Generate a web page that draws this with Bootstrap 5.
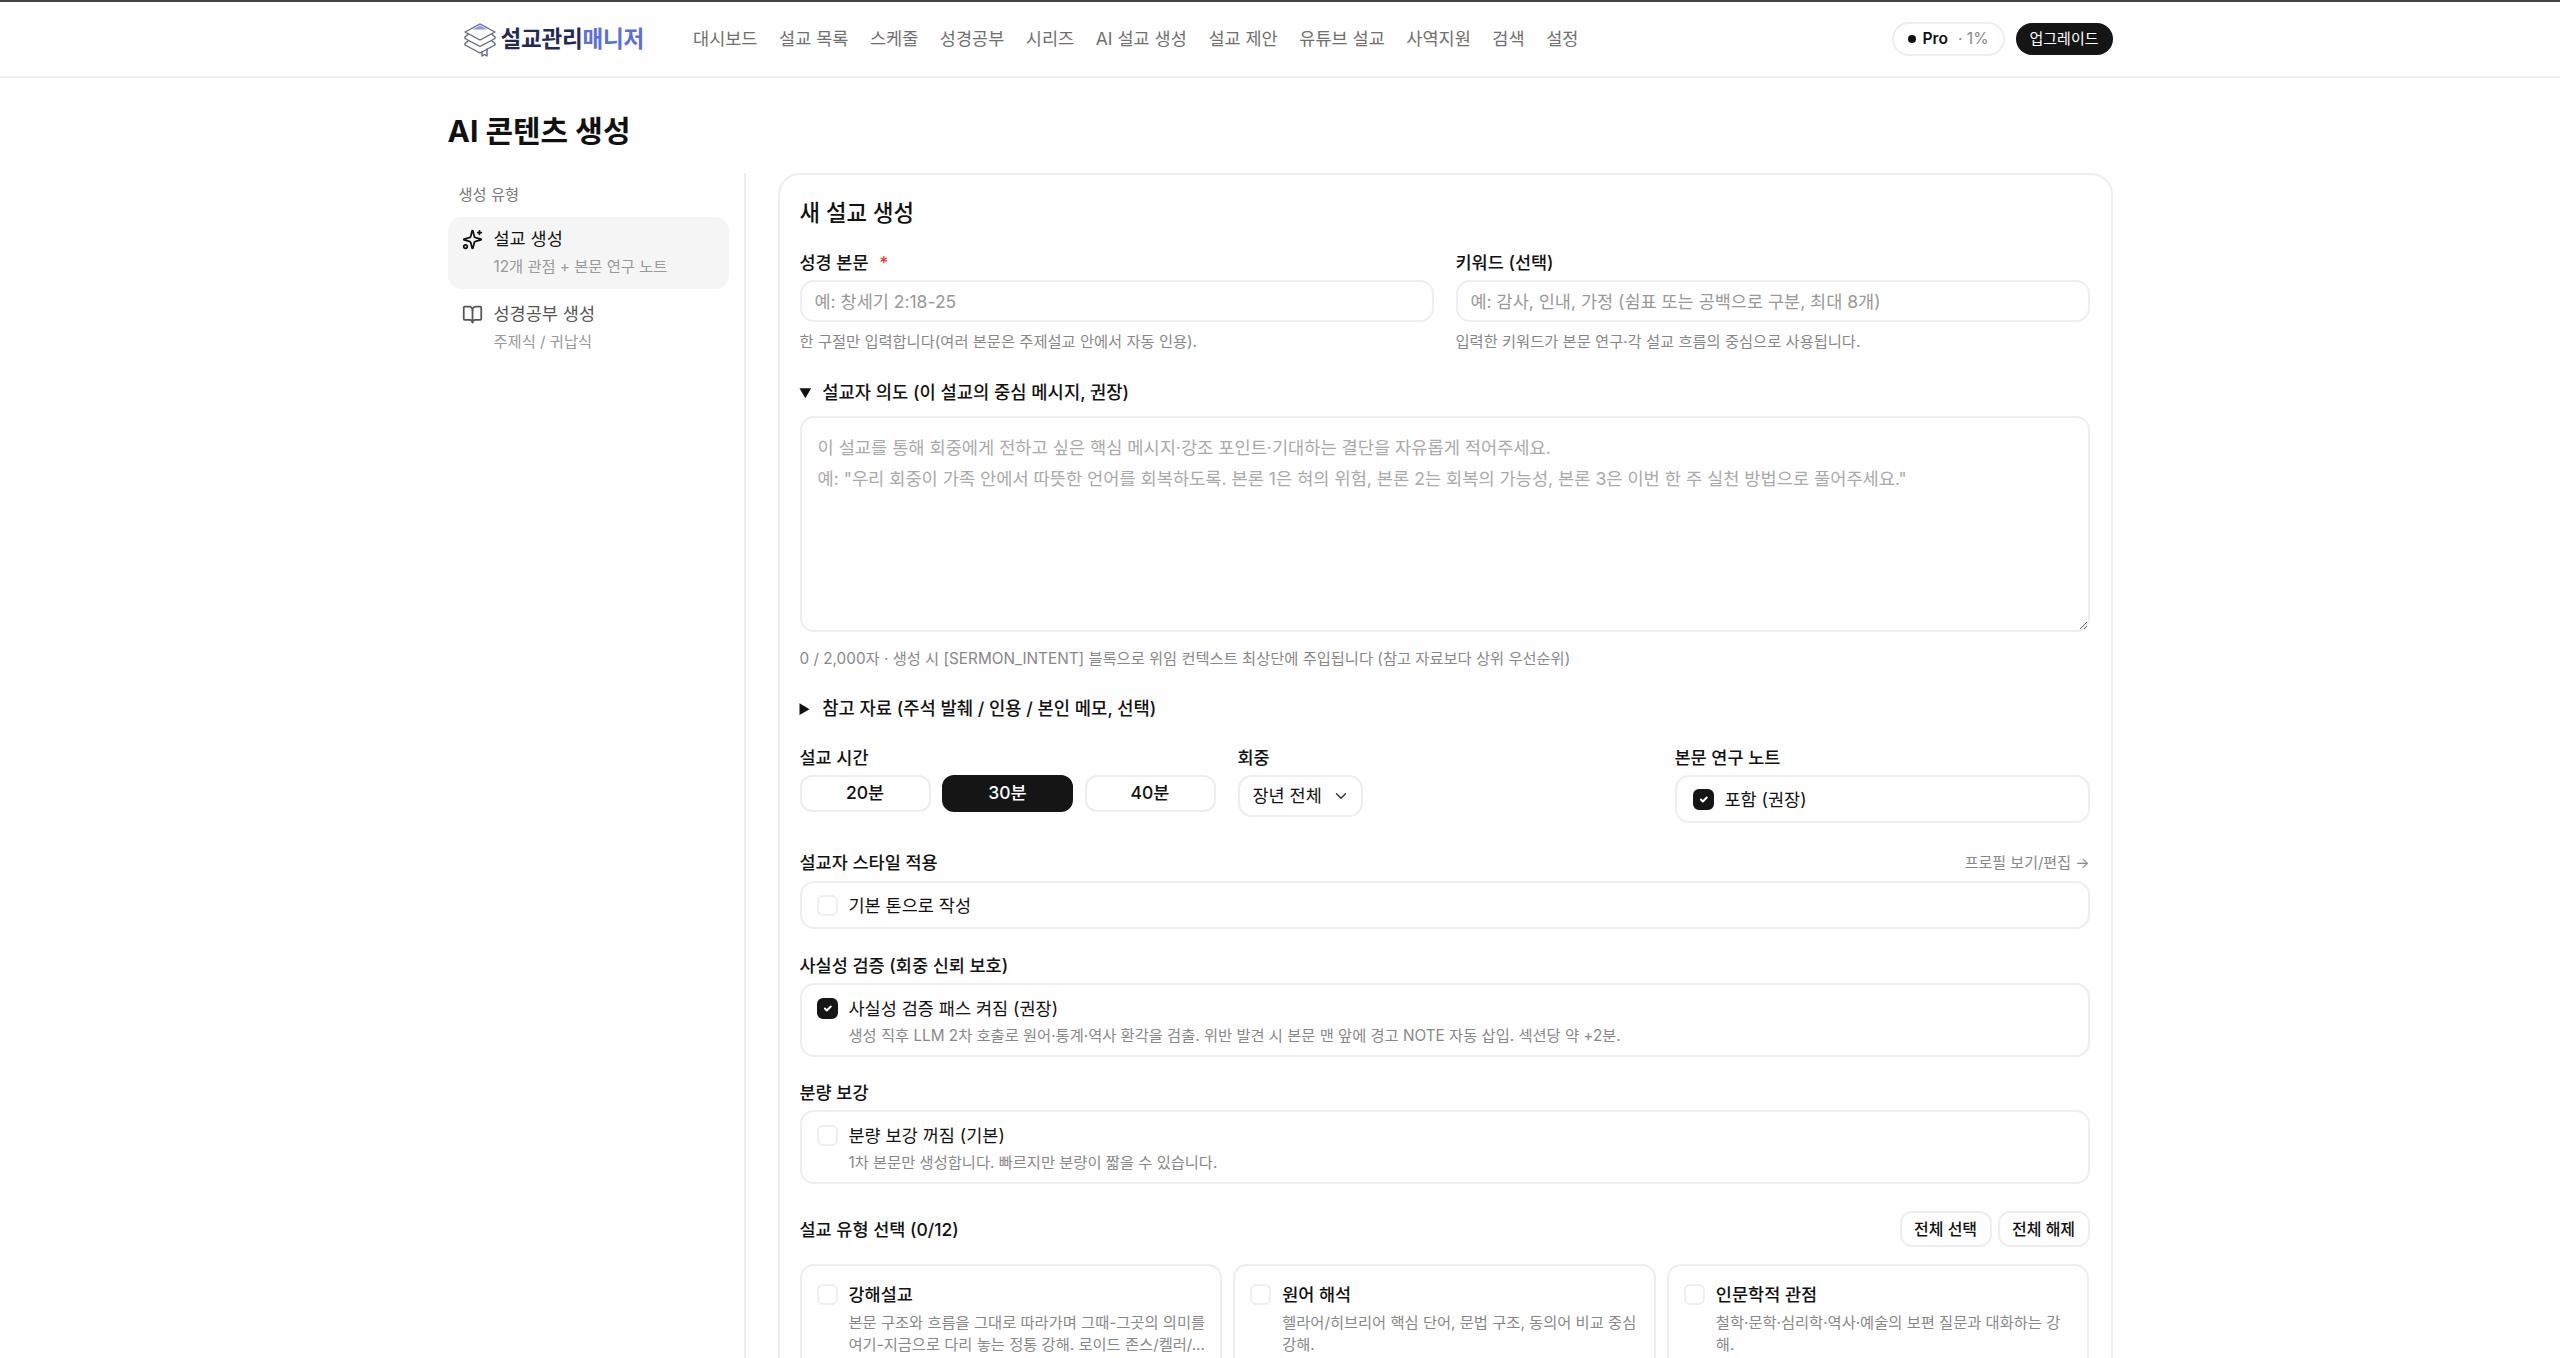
<!DOCTYPE html>
<html lang="ko">
<head>
  <meta charset="UTF-8">
  <meta name="viewport" content="width=device-width, initial-scale=1.0">
  <title>AI 콘텐츠 생성</title>
  <link rel="stylesheet" href="https://cdn.jsdelivr.net/npm/bootstrap@5.3.3/dist/css/bootstrap.min.css">
  <style>
    html, body { height: 100%; overflow: hidden; }
    body {
      font-family: Inter, "Noto Sans CJK KR", sans-serif;
      font-size: 17.5px;
      color: #111;
      background: #fff;
    }
    .app-top {
      height: 78px;
      border-top: 2px solid #444;
      border-bottom: 2px solid #eee;
      padding: 0;
    }
    .wrap-w { width: 1665px; margin: 0 auto; }
    .brand-box { padding-left: 14px; margin-right: 49px; gap: 3px; font-size: 22.5px; font-weight: 700; color: #1f2b56; letter-spacing: -0.2px; }
    .brand-box span { color: #5b6fd8; }
    .brand-box svg { width: 36px; height: 36px; }
    .top-links { gap: 21.6px; }
    .top-links .nav-link { padding: 0; color: #6f6f6f; font-size: 17.5px; }
    .plan-pill {
      height: 34px;
      padding: 0 14px;
      border: 2px solid #eee;
      border-radius: 17px;
      font-size: 15.6px;
      margin-right: 11px;
    }
    .plan-pill i { width: 8px; height: 8px; border-radius: 50%; background: #111; margin-right: 7px; }
    .plan-pill b { font-weight: 600; }
    .plan-pill em { font-style: normal; color: #888; margin-left: 10px; }
    .up-btn {
      height: 32px;
      width: 97px;
      padding: 0;
      border-radius: 16px;
      background: #151515;
      color: #fff;
      font-size: 15px;
      border: 0;
    }
    .page-title { font-size: 30px; font-weight: 700; line-height: 44px; margin: 31px 0 20px; }
    .side-col { width: 298px; border-right: 2px solid #eee; padding-right: 15px; min-height: 1200px; flex: none; }
    .side-head { font-size: 15.3px; color: #777; padding: 11px 11px 0; line-height: 22px; margin-bottom: 11px; }
    .side-item { display: flex; gap: 11px; padding: 8px 14px; height: 72px; border-radius: 14px; margin-bottom: 3px; color: #555; }
    .side-item.is-on { background: #f5f5f5; color: #111; }
    .side-item svg { width: 21px; height: 21px; margin-top: 4px; flex: none; }
    .side-item div { line-height: 28px; }
    .side-item small { display: block; font-size: 15.3px; color: #999; line-height: 24px; margin-top: 2px; }
    .main-col { margin-left: 32px; flex: 1; }
    .form-shell {
      border: 2px solid #eee;
      border-radius: 22px;
      padding: 21px 21px 40px 20px;
    }
    .shell-title { font-size: 22.3px; font-weight: 500; line-height: 32px; padding-top: 1px; margin-bottom: 21px; }
    .fld-label { font-size: 17.5px; font-weight: 500; line-height: 24px; padding-top: 1px; margin-bottom: 5px; display: block; }
    .fld-label i { color: #e53935; font-style: normal; margin-left: 6px; }
    .form-control, .form-select {
      font-size: 17.5px;
      border: 2px solid #eee;
      border-radius: 14px;
      color: #111;
    }
    .form-control::placeholder { color: #999; }
    .line-input { height: 42px; padding: 0 13px; }
    .two-col { gap: 22px; }
    .two-col > div { flex: 1 1 0; }
    .tip-text { font-size: 15.3px; color: #888; line-height: 22px; margin-top: 9px; }
    details { margin-top: 27px; }
    summary { font-size: 17.7px; font-weight: 500; line-height: 24px; padding-top: 1px; }
    summary span { margin-left: 4px; }
    .intent-box { height: 216px; margin-top: 11px; padding: 14px 16px; line-height: 31px; font-size: 17.6px; }
    .intent-box::placeholder { color: #aaa; }
    .tip-wide { margin-top: 16px; }
    .refs-open { margin-top: 26px; }
    .opts-row { margin-top: 24px; display: flex; }
    .time-col { width: 438px; }
    .aud-col { width: 437px; }
    .note-col { flex: 1; }
    .time-btns { gap: 11.500px; }
    .time-btn {
      width: 131px;
      height: 37px;
      padding: 0;
      font-size: 17.5px;
      font-weight: 500;
      border: 2px solid #eee;
      border-radius: 12px;
      color: #111;
    }
    .time-btn.is-on { background: #151515; border-color: #151515; color: #fff; }
    .aud-pick { width: 125px; height: 42px; padding: 0 30px 0 13px; background-position: right 12px center; }
    .tick-box {
      display: flex;
      gap: 11px;
      border: 2px solid #eee;
      border-radius: 14px;
      padding: 12px 15px;
      margin: 0;
    }
    .tick-box .form-check-input,
    .type-tile .form-check-input {
      width: 21px;
      height: 21px;
      margin: 1px 0 0;
      flex: none;
      border: 2px solid #eee;
      border-radius: 6px;
    }
    .form-check-input:checked { background-color: #151515; border-color: #151515; background-size: 75%; }
    .tick-name { line-height: 24px; }
    .tick-sub { font-size: 15.3px; color: #888; line-height: 22px; margin-top: 4px; }
    .note-tick { height: 48px; padding: 11px 16px 0; }
    .flat-tick { height: 48px; padding-top: 11px; }
    .fact-tick { height: 74px; }
    .vol-tick { height: 74px; }
    .blk-1 { margin-top: 27px; }
    .style-head { margin-bottom: 1px; }
    .blk-2 { margin-top: 24px; }
    .blk-3 { margin-top: 23px; }
    .blk-4 { margin-top: 27px; }
    .profile-lnk { font-size: 15px; color: #888; text-decoration: none; line-height: 24px; padding-top: 1px; }
    .ghost-row { gap: 6px; }
    .ghost-btn {
      height: 36px;
      width: 92px;
      padding: 0;
      font-size: 16px;
      font-weight: 500;
      border: 2px solid #eee;
      border-radius: 12px;
      color: #111;
    }
    .type-grid { display: grid; grid-template-columns: repeat(3, 1fr); gap: 11px; margin-top: 17px; }
    .type-tile { display: flex; gap: 11px; border: 2px solid #eee; border-radius: 14px; padding: 17px 13px 17px 15px; height: 130px; }
    .type-tile strong { font-weight: 500; line-height: 24px; display: block; }
    .type-tile p { font-size: 15.3px; color: #888; line-height: 22px; margin: 5px 0 0; }
  </style>
</head>
<body>
  <nav class="navbar app-top">
    <div class="wrap-w d-flex align-items-center">
      <a class="d-flex align-items-center brand-box text-decoration-none" href="#">
        <svg viewBox="0 0 36 36" fill="none" stroke="#5c6785" stroke-width="1.400" stroke-linejoin="round" stroke-linecap="round">
          <path d="M18 3 33 11 18 19 3 11Z"/>
          <path d="M18 4.500 25.500 8.500H10.500Z" fill="#8c9be6" stroke="none"/>
          <path d="M6 13.500 3 16v1.500L18 25.500 33 17.500V16l-3-2.500"/>
          <path d="M6 20 3 22.500V24L18 32l15-8v-1.500L30 20"/>
          <path d="M20 31v4l2.500-1.500L25 35v-7"/>
        </svg>
        <div>설교관리<span>매니저</span></div>
      </a>
      <ul class="nav top-links">
        <li class="nav-item"><a class="nav-link" href="#">대시보드</a></li>
        <li class="nav-item"><a class="nav-link" href="#">설교 목록</a></li>
        <li class="nav-item"><a class="nav-link" href="#">스케줄</a></li>
        <li class="nav-item"><a class="nav-link" href="#">성경공부</a></li>
        <li class="nav-item"><a class="nav-link" href="#">시리즈</a></li>
        <li class="nav-item"><a class="nav-link" href="#">AI 설교 생성</a></li>
        <li class="nav-item"><a class="nav-link" href="#">설교 제안</a></li>
        <li class="nav-item"><a class="nav-link" href="#">유튜브 설교</a></li>
        <li class="nav-item"><a class="nav-link" href="#">사역지원</a></li>
        <li class="nav-item"><a class="nav-link" href="#">검색</a></li>
        <li class="nav-item"><a class="nav-link" href="#">설정</a></li>
      </ul>
      <div class="ms-auto d-flex align-items-center">
        <div class="plan-pill d-flex align-items-center"><i></i><b>Pro</b><em>· 1%</em></div>
        <button class="btn up-btn" type="button">업그레이드</button>
      </div>
    </div>
  </nav>

  <main class="wrap-w">
    <h1 class="page-title">AI 콘텐츠 생성</h1>
    <div class="d-flex">
      <aside class="side-col">
        <div class="side-head">생성 유형</div>
        <div class="side-item is-on">
          <svg viewBox="0 0 24 24" fill="none" stroke="currentColor" stroke-width="2" stroke-linecap="round" stroke-linejoin="round">
            <path d="M9.937 15.500A2 2 0 0 0 8.500 14.063l-6.135-1.582a.5.5 0 0 1 0-.962L8.500 9.936A2 2 0 0 0 9.937 8.500l1.582-6.135a.5.5 0 0 1 .963 0L14.063 8.500A2 2 0 0 0 15.500 9.937l6.135 1.581a.5.5 0 0 1 0 .964L15.500 14.063a2 2 0 0 0-1.437 1.437l-1.582 6.135a.5.5 0 0 1-.963 0z"/>
            <path d="M20 2v4"/><path d="M22 4h-4"/><circle cx="4" cy="20" r="2"/>
          </svg>
          <div>설교 생성<small>12개 관점 + 본문 연구 노트</small></div>
        </div>
        <div class="side-item">
          <svg viewBox="0 0 24 24" fill="none" stroke="currentColor" stroke-width="2" stroke-linecap="round" stroke-linejoin="round">
            <path d="M12 7v14"/>
            <path d="M3 18a1 1 0 0 1-1-1V4a1 1 0 0 1 1-1h5a4 4 0 0 1 4 4 4 4 0 0 1 4-4h5a1 1 0 0 1 1 1v13a1 1 0 0 1-1 1h-6a3 3 0 0 0-3 3 3 3 0 0 0-3-3z"/>
          </svg>
          <div>성경공부 생성<small>주제식 / 귀납식</small></div>
        </div>
      </aside>

      <section class="main-col">
        <form class="form-shell">
          <div class="shell-title">새 설교 생성</div>
          <div class="d-flex two-col">
            <div>
              <label class="fld-label">성경 본문 <i>*</i></label>
              <input class="form-control line-input" placeholder="예: 창세기 2:18-25">
              <div class="tip-text">한 구절만 입력합니다(여러 본문은 주제설교 안에서 자동 인용).</div>
            </div>
            <div>
              <label class="fld-label">키워드 (선택)</label>
              <input class="form-control line-input" placeholder="예: 감사, 인내, 가정 (쉼표 또는 공백으로 구분, 최대 8개)">
              <div class="tip-text">입력한 키워드가 본문 연구·각 설교 흐름의 중심으로 사용됩니다.</div>
            </div>
          </div>

          <details open>
            <summary><span>설교자 의도 (이 설교의 중심 메시지, 권장)</span></summary>
            <textarea class="form-control intent-box" placeholder="이 설교를 통해 회중에게 전하고 싶은 핵심 메시지·강조 포인트·기대하는 결단을 자유롭게 적어주세요.&#10;예: &quot;우리 회중이 가족 안에서 따뜻한 언어를 회복하도록. 본론 1은 혀의 위험, 본론 2는 회복의 가능성, 본론 3은 이번 한 주 실천 방법으로 풀어주세요.&quot;"></textarea>
            <div class="tip-text tip-wide">0 / 2,000자 · 생성 시 [SERMON_INTENT] 블록으로 위임 컨텍스트 최상단에 주입됩니다 (참고 자료보다 상위 우선순위)</div>
          </details>
          <details class="refs-open">
            <summary><span>참고 자료 (주석 발췌 / 인용 / 본인 메모, 선택)</span></summary>
          </details>

          <div class="opts-row">
            <div class="time-col">
              <label class="fld-label">설교 시간</label>
              <div class="d-flex time-btns">
                <button type="button" class="btn time-btn">20분</button>
                <button type="button" class="btn time-btn is-on">30분</button>
                <button type="button" class="btn time-btn">40분</button>
              </div>
            </div>
            <div class="aud-col">
              <label class="fld-label">회중</label>
              <select class="form-select aud-pick"><option>장년 전체</option></select>
            </div>
            <div class="note-col">
              <label class="fld-label">본문 연구 노트</label>
              <label class="tick-box note-tick"><input class="form-check-input" type="checkbox" checked><span class="tick-name">포함 (권장)</span></label>
            </div>
          </div>

          <div class="blk-1">
            <div class="d-flex justify-content-between style-head">
              <label class="fld-label">설교자 스타일 적용</label>
              <a class="profile-lnk" href="#">프로필 보기/편집 →</a>
            </div>
            <label class="tick-box flat-tick"><input class="form-check-input" type="checkbox"><span class="tick-name">기본 톤으로 작성</span></label>
          </div>

          <div class="blk-2">
            <label class="fld-label">사실성 검증 (회중 신뢰 보호)</label>
            <label class="tick-box fact-tick"><input class="form-check-input" type="checkbox" checked>
              <span><span class="tick-name d-block">사실성 검증 패스 켜짐 (권장)</span>
              <span class="tick-sub d-block">생성 직후 LLM 2차 호출로 원어·통계·역사 환각을 검출. 위반 발견 시 본문 맨 앞에 경고 NOTE 자동 삽입. 섹션당 약 +2분.</span></span>
            </label>
          </div>

          <div class="blk-3">
            <label class="fld-label">분량 보강</label>
            <label class="tick-box vol-tick"><input class="form-check-input" type="checkbox">
              <span><span class="tick-name d-block">분량 보강 꺼짐 (기본)</span>
              <span class="tick-sub d-block">1차 본문만 생성합니다. 빠르지만 분량이 짧을 수 있습니다.</span></span>
            </label>
          </div>

          <div class="blk-4 d-flex justify-content-between align-items-center">
            <span class="fld-label mb-0">설교 유형 선택 (0/12)</span>
            <div class="d-flex ghost-row">
              <button type="button" class="btn ghost-btn">전체 선택</button>
              <button type="button" class="btn ghost-btn">전체 해제</button>
            </div>
          </div>
          <div class="type-grid">
            <label class="type-tile"><input class="form-check-input" type="checkbox"><span><strong>강해설교</strong><p>본문 구조와 흐름을 그대로 따라가며 그때-그곳의 의미를 여기-지금으로 다리 놓는 정통 강해. 로이드 존스/켈러/...</p></span></label>
            <label class="type-tile"><input class="form-check-input" type="checkbox"><span><strong>원어 해석</strong><p>헬라어/히브리어 핵심 단어, 문법 구조, 동의어 비교 중심 강해.</p></span></label>
            <label class="type-tile"><input class="form-check-input" type="checkbox"><span><strong>인문학적 관점</strong><p>철학·문학·심리학·역사·예술의 보편 질문과 대화하는 강해.</p></span></label>
          </div>
        </form>
      </section>
    </div>
  </main>
  <script src="https://cdn.jsdelivr.net/npm/bootstrap@5.3.3/dist/js/bootstrap.bundle.min.js"></script>
</body>
</html>
